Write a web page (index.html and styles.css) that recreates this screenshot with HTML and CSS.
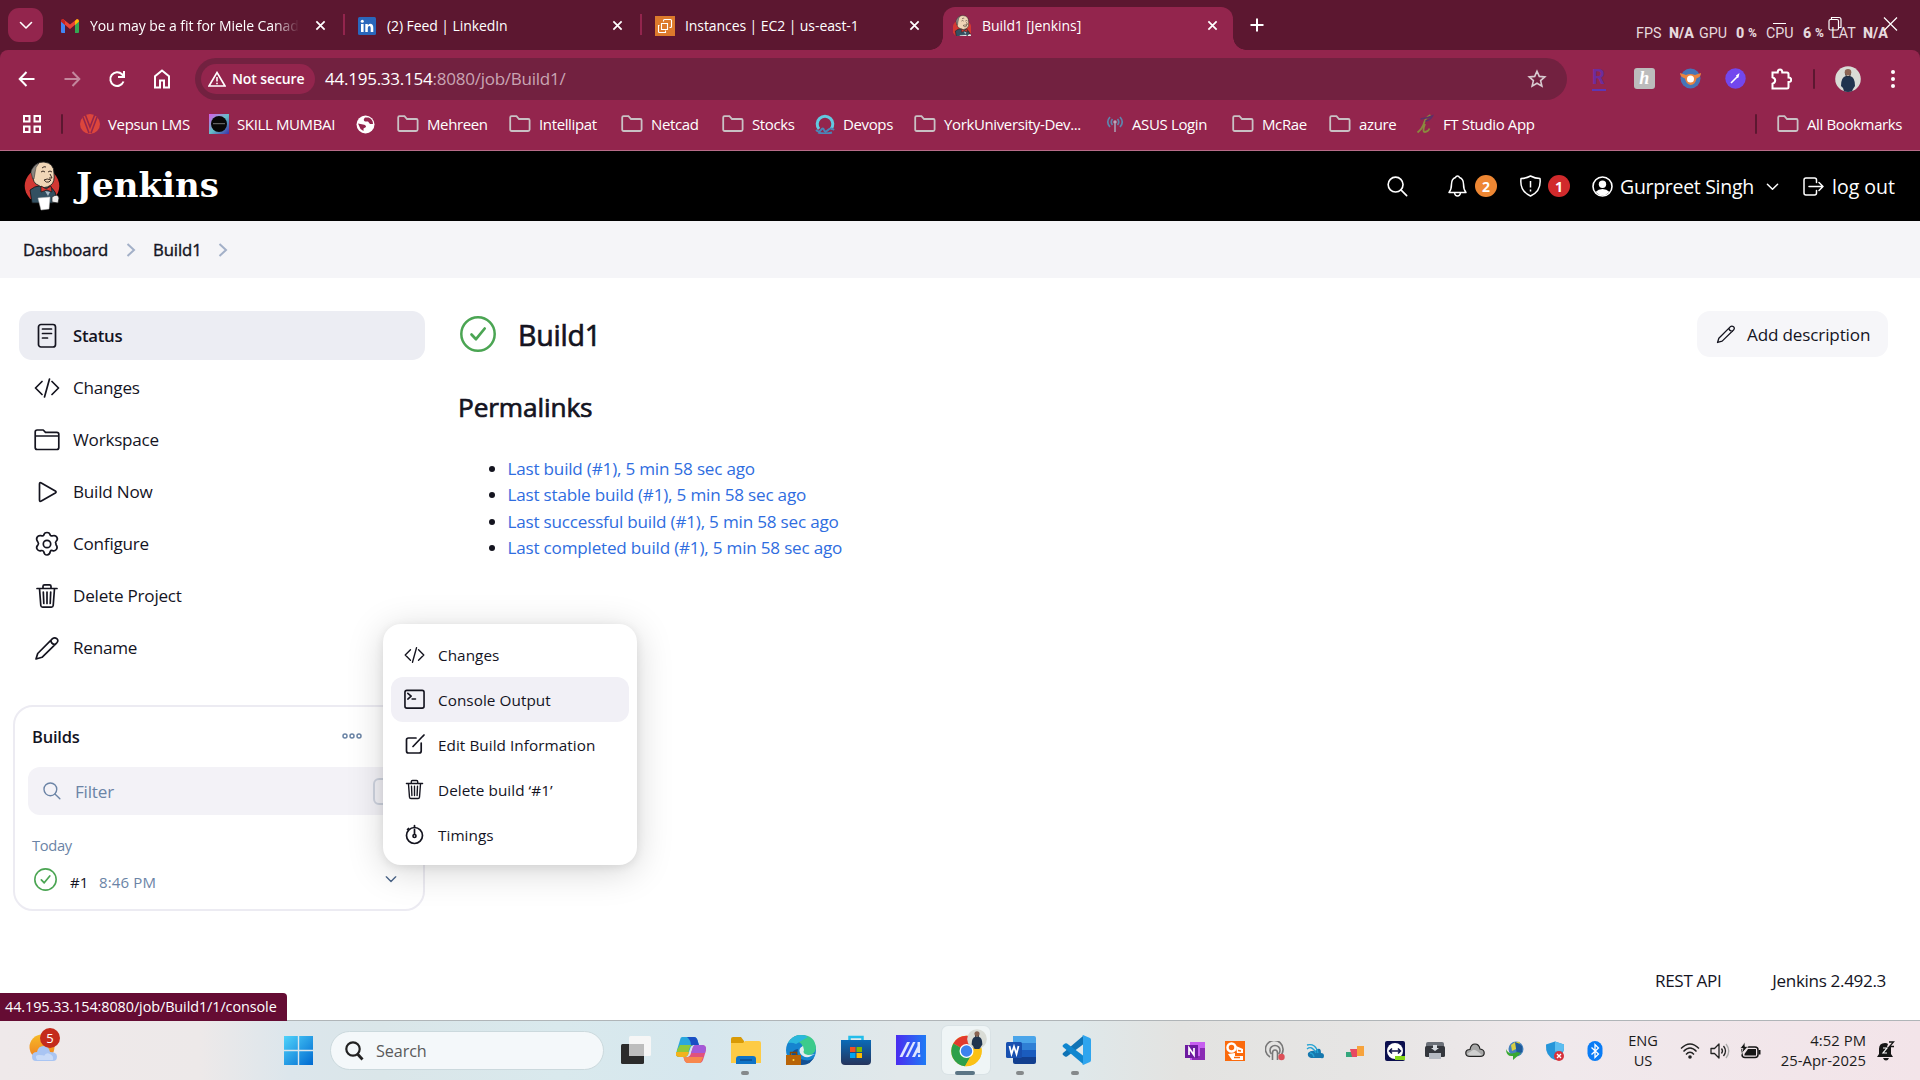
FILE: index.html
```html
<!DOCTYPE html>
<html lang="en">
<head>
<meta charset="utf-8">
<title>Build1 [Jenkins]</title>
<link rel="stylesheet" href="styles.css">
</head>
<body>
<svg class="sprite" aria-hidden="true">
  <symbol id="x" viewBox="0 0 12 12"><path d="M1.500 1.500l9 9M10.500 1.500l-9 9" stroke="#fff" stroke-width="1.900" fill="none"/></symbol>
  <symbol id="folder" viewBox="0 0 22 18"><path d="M1.200 14.500v-12q0-1.300 1.300-1.300h5l2.500 2.800h9.300q1.300 0 1.300 1.300v9.200q0 1.500-1.500 1.500H2.700q-1.500 0-1.500-1.500z" fill="none" stroke="#c9c1c4" stroke-width="1.800"/></symbol>
  <symbol id="chev" viewBox="0 0 14 14"><path d="M1.500 4.500L7 10l5.500-5.500" fill="none" stroke="currentColor" stroke-width="1.600" stroke-linecap="round" stroke-linejoin="round"/></symbol>
  <symbol id="crumb" viewBox="0 0 10 16"><path d="M1.500 2L8 8l-6.500 6" fill="none" stroke="#a3b0c8" stroke-width="2"/></symbol>
  <symbol id="code" viewBox="0 0 26 20"><path d="M8 3.500L1.500 10 8 16.500M18 3.500l6.500 6.500-6.500 6.500M15.500 1l-5 18" class="ln"/></symbol>
  <symbol id="trash" viewBox="0 0 26 26"><path d="M5.500 5.500l1.300 17q.2 1.700 1.800 1.700h8.800q1.600 0 1.800-1.700l1.300-17M3 5.500h20M9 5.500V3.300q0-1.500 1.500-1.500h5q1.500 0 1.500 1.500v2.200M9.300 9l.5 11.500M13 9v11.500M16.700 9l-.5 11.500" class="ln"/></symbol>
  <symbol id="pencil" viewBox="0 0 26 26"><path d="M2 24l1.700-5.500L18.500 3.700q2.200-1.800 4.300 0t0 4.100L8 22.300zM17 5.200q-.3 3.800 4.300 4.300" class="ln"/></symbol>
  <symbol id="glass" viewBox="0 0 22 22"><circle cx="9" cy="9" r="7.800" fill="none" stroke="currentColor" stroke-width="1.700"/><path d="M14.600 14.600l6 6" stroke="currentColor" stroke-width="1.700" stroke-linecap="round"/></symbol>
  <symbol id="ok" viewBox="0 0 36 36"><circle cx="18" cy="18" r="16.700" fill="none" stroke="#4ba553" stroke-width="2.500"/><path d="M11.500 18.500l4.500 4.700 8.700-10.700" fill="none" stroke="#4ba553" stroke-width="2.700" stroke-linecap="round" stroke-linejoin="round"/></symbol>
  <symbol id="portrait" viewBox="0 0 26 26"><circle cx="13" cy="13" r="12.800" fill="#d9dcd6"/><path d="M6 20q0-9 5-10h4q5 1 5 10l-2 3-1 2.200q-4 1.500-8 0L8 22z" fill="#20344e"/><circle cx="13" cy="6.300" r="3.300" fill="#8a6452"/><path d="M10.200 7.500q2.800 5.500 5.600 0l-.6 3h-4.400z" fill="#2a2325"/></symbol>
  <symbol id="butler" viewBox="0 0 36 50"><circle cx="18" cy="25" r="17.300" fill="#d33833"/><path d="M6 29q5-4 9-4l12 1q5 4 6 12l-4 4H8z" fill="#335061" stroke="#111" stroke-width=".8"/><path d="M8 12Q11 0 20 1q10 1 10 11 1 9-3 12-7 5-13 0-5-1-6-12z" fill="#f0d6b7" stroke="#222" stroke-width=".9"/><path d="M8 15q-2-4 0-7 3-5 7-6-4 4-4 10l-1 6q-2 0-2-3z" fill="#8a8580" stroke="#222" stroke-width=".5"/><path d="M17 11q2-2 4 0M24 11q2-2 4 0M26 13l2 4h-3M20 19q3-2 7 0l-2 2q-3 1-5-2M18 7q2-2 4-1" fill="none" stroke="#3c2d25" stroke-width="1"/><path d="M17 25l5 3 5-3 1 6-5-2-6 2z" fill="#d33833" stroke="#111" stroke-width=".6"/><path d="M21 30l5 1-2 4z" fill="#a9bac6"/><path d="M14 37l12-1-1 12-8 1z" fill="#fff" stroke="#bbb" stroke-width=".5"/><path d="M28 36q6-4 7 1l-1 5-6-1z" fill="#eee" stroke="#222" stroke-width=".7"/></symbol>
</svg>

<header class="tabs">
  <button class="tabmenu"><svg width="14" height="14"><use href="#chev"/></svg></button>
  <div class="tab tab1">
    <svg width="18" height="14" viewBox="0 0 18 14"><path d="M0 2v11q0 1 1 1h3V5z" fill="#4285f4"/><path d="M18 2v11q0 1-1 1h-3V5z" fill="#34a853"/><path d="M0 2.500Q0 0 2 0l7 5.500L16 0q2 0 2 2.500L9 10z" fill="#ea4335"/><path d="M14 2l2-2q2 0 2 2.500L14 6z" fill="#fbbc04"/><path d="M0 2.500Q0 0 2 0l2 2v4z" fill="#c5221f"/></svg>
    <span class="fade">You may be a fit for Miele Canada</span><svg class="cls"><use href="#x"/></svg>
  </div>
  <div class="tab tab2">
    <svg width="18" height="18" viewBox="0 0 18 18"><rect width="18" height="18" rx="1.500" fill="#2a67bc"/><g fill="#fff"><circle cx="4.300" cy="4.200" r="1.500"/><path d="M3 7h2.600v8H3zM7.300 7h2.500v1.200q2.500-2.600 4.700-.5.800.8.800 3.300v4h-2.600v-4q0-2-1.300-2-1.600 0-1.600 2v4H7.300z"/></g></svg>
    <span>(2) Feed | LinkedIn</span><svg class="cls"><use href="#x"/></svg>
  </div>
  <div class="tab tab3">
    <svg width="20" height="20" viewBox="0 0 20 20"><rect width="20" height="20" fill="#dc7a2c"/><g fill="none" stroke="#fff" stroke-width="1.100"><path d="M6.500 7.500h6v6h-6zM8.500 5.500v-1q0-1 1-1h6q1 0 1 1v6q0 1-1 1h-1M4.500 9.500h-1v6q0 1 1 1h6v-2"/></g></svg>
    <span>Instances | EC2 | us-east-1</span><svg class="cls"><use href="#x"/></svg>
  </div>
  <div class="tab tab4">
    <svg width="18" height="21" viewBox="2 0 32 38"><use href="#butler" width="36" height="50"/></svg>
    <span>Build1 [Jenkins]</span><svg class="cls"><use href="#x"/></svg>
  </div>
  <svg class="plus" width="14" height="14" viewBox="0 0 14 14"><path d="M7 .5v13M.5 7h13" stroke="#fff" stroke-width="2"/></svg>
  <div class="meter"><span>FPS</span><b>N/A</b><span>GPU</span><b>0</b><b class="pc">%</b><span>CPU</span><b>6</b><b class="pc">%</b><span>LAT</span><b>N/A</b></div>
  <svg class="winctl" width="132" height="20" viewBox="0 0 132 20"><g fill="none" stroke="#fff" stroke-width="1.200"><path d="M6 8.500h13M117 2.500l13 13M130 2.500l-13 13"/><rect x="62" y="4.500" width="9.500" height="10.500" rx="1.500"/><path d="M64.500 4V2.500h7.500q2 0 2 2v8h-2"/></g></svg>
</header>

<div class="chrome">
  <nav class="toolbar">
    <div class="nav">
      <svg width="18" height="18" viewBox="0 0 18 18"><path d="M16.500 9H2M8.500 2L1.700 9l6.800 7" fill="none" stroke="#fff" stroke-width="2"/></svg>
      <svg width="18" height="18" viewBox="0 0 18 18" opacity=".45"><path d="M1.500 9H16M9.500 2l6.800 7-6.800 7" fill="none" stroke="#fff" stroke-width="2"/></svg>
      <svg width="18" height="18" viewBox="0 0 18 18"><path d="M15.500 11.500A6.800 6.800 0 1 1 14 4.300l2 2.200M16 1v6h-6" fill="none" stroke="#fff" stroke-width="2"/></svg>
      <svg width="18" height="20" viewBox="0 0 18 20"><path d="M2 18.500V7.300L9 1.500l7 5.800v11.200h-5v-7H7v7z" fill="none" stroke="#fff" stroke-width="2"/></svg>
    </div>
    <div class="omni">
      <div class="chip"><svg width="18" height="16" viewBox="0 0 18 16"><path d="M9 1.500l8 13.500H1zM9 6v4.500M9 11.700v1.600" fill="none" stroke="#fff" stroke-width="1.600"/></svg><b>Not secure</b></div>
      <span class="url">44.195.33.154<i>:8080/job/Build1/</i></span>
      <svg class="star" width="20" height="20" viewBox="0 0 20 20"><path d="M10 2.200l2.300 5.200 5.500.5-4.200 3.700 1.300 5.500-4.900-2.900-4.900 2.900 1.300-5.500-4.200-3.700 5.500-.5z" fill="none" stroke="#d8cbd0" stroke-width="1.600"/></svg>
    </div>
    <div class="exts">
      <span class="rak">R</span>
      <span class="honey">h</span>
      <svg width="21" height="21" viewBox="0 0 21 21"><circle cx="10.500" cy="10.500" r="10" fill="#4674b8"/><path d="M0 5l6 2q4-2 9 0l6-2q0 4-4.500 5.500-1 6-6 6.500Q6 16 5 10.500 0 9 0 5z" fill="#ea8440"/><circle cx="10.500" cy="11" r="3.500" fill="#fff"/></svg>
      <svg width="21" height="21" viewBox="0 0 21 21"><circle cx="10.500" cy="10.500" r="10.200" fill="#7247ee"/><path d="M6 15l6-6" stroke="#fff" stroke-width="1.600"/><path d="M11 7.500L14.500 5 13.500 9.500 12 10z" fill="#fff"/></svg>
      <svg width="21" height="22" viewBox="0 0 21 22"><path d="M1.500 4.500h5.200q0-3 2.300-3t2.300 3h4.700q1.500 0 1.500 1.500v3.500q2.700 0 2.700 2.300T17.500 14v5q0 1.500-1.500 1.500H1.500v-4.800q2.700-1 2.700-3.200T1.500 9.300z" fill="none" stroke="#fff" stroke-width="2"/></svg>
    </div>
    <i class="vr"></i>
    <svg class="avatar" width="26" height="26"><use href="#portrait"/></svg>
    <svg class="dots" width="4" height="18" viewBox="0 0 4 18"><g fill="#fff"><circle cx="2" cy="2" r="2"/><circle cx="2" cy="9" r="2"/><circle cx="2" cy="16" r="2"/></g></svg>
  </nav>

  <nav class="marks">
    <svg width="18" height="18" viewBox="0 0 18 18"><path d="M1 1h5.500v5.500H1zM11.500 1H17v5.500h-5.500zM1 11.500h5.500V17H1zM11.500 11.500H17V17h-5.500z" fill="none" stroke="#fff" stroke-width="2"/></svg>
    <i class="vr"></i>
    <a><svg width="20" height="20" viewBox="0 0 20 20"><circle cx="10" cy="10" r="10" fill="#dc463c"/><path d="M5 0l5 13L15 0M3 3l6 16M17 3l-6 16" fill="none" stroke="#93254d" stroke-width="1.600"/></svg><span>Vepsun LMS</span></a>
    <a><svg width="20" height="20" viewBox="0 0 20 20"><defs><linearGradient id="sk" x2="1" y2="1"><stop stop-color="#d95ae8"/><stop offset=".5" stop-color="#66bfc8"/><stop offset="1" stop-color="#3b2fa8"/></linearGradient></defs><rect width="20" height="20" fill="url(#sk)"/><circle cx="10" cy="10" r="8" fill="#080808"/><path d="M4 9.700h12" stroke="#777"/></svg><span>SKILL MUMBAI</span></a>
    <svg width="19" height="19" viewBox="0 0 19 19"><circle cx="9.500" cy="9.500" r="9" fill="#fff"/><path d="M2 8.500l5 1q3 0 3 2.500l-2.500 1.500V16l-3-2zM9 2.500Q6.500 5 9 6.500h3l2 2.500h3Q17 4 12.500 2.500z" fill="#93254d"/></svg>
    <a><svg class="fd"><use href="#folder"/></svg><span>Mehreen</span></a>
    <a><svg class="fd"><use href="#folder"/></svg><span>Intellipat</span></a>
    <a><svg class="fd"><use href="#folder"/></svg><span>Netcad</span></a>
    <a><svg class="fd"><use href="#folder"/></svg><span>Stocks</span></a>
    <a><svg width="20" height="20" viewBox="0 0 20 20"><path d="M4 15A7.800 7.800 0 1 1 16 15" fill="none" stroke="#63c9e0" stroke-width="3"/><path d="M1 16q3 3 5 0t3 0 4 0 6 0M3 18.500q7 2 14 0" fill="none" stroke="#4a86b8" stroke-width="2"/></svg><span>Devops</span></a>
    <a><svg class="fd"><use href="#folder"/></svg><span>YorkUniversity-Dev...</span></a>
    <a><svg width="18" height="18" viewBox="0 0 18 18"><g fill="none" stroke="#5e86ad" stroke-width="1.700"><path d="M4 2Q-.5 7 4 12M14 2q4.500 5 0 10M6.500 4Q4 7 6.500 10M11.500 4q2.500 3 0 6"/></g><circle cx="9" cy="7" r="1.700" fill="#b9a9bb"/><path d="M9 8v9" stroke="#a78fa6" stroke-width="1.800"/></svg><span>ASUS Login</span></a>
    <a><svg class="fd"><use href="#folder"/></svg><span>McRae</span></a>
    <a><svg class="fd"><use href="#folder"/></svg><span>azure</span></a>
    <a><svg width="19" height="20" viewBox="0 0 18 20"><path d="M1 18.500q5-4 6.500-9.500T14 1M8.500 10q-3 8 0 8t4.500-3.500" fill="none" stroke="#8a8a3e" stroke-width="1.800"/><path d="M4 5q7-1 12-3-2 4-7 5" fill="none" stroke="#5c3168" stroke-width="1.500"/></svg><span>FT Studio App</span></a>
    <i class="vr"></i>
    <a><svg class="fd"><use href="#folder"/></svg><span>All Bookmarks</span></a>
  </nav>
</div>

<header class="jhead">
  <svg width="36" height="50"><use href="#butler"/></svg>
  <span class="brand">Jenkins</span>
  <div class="jright">
    <svg class="jsearch" width="21" height="21"><use href="#glass"/></svg>
    <svg width="21" height="22" viewBox="0 0 21 22"><path d="M2 17.500q2.500-3 2.500-8.500 0-5 4-6.500Q9 1 10.500 1T12.500 2.500q4 1.500 4 6.500 0 5.500 2.500 8.500zM7.500 18q.5 3 3 3t3-3" fill="none" stroke="#fff" stroke-width="1.500" stroke-linejoin="round"/></svg>
    <b class="badge or">2</b>
    <svg class="jshield" width="23" height="22" viewBox="0 0 23 22"><path d="M11.500 1q4.500 2.500 9.500 2.600Q22.500 16 11.500 21 .5 16 2 3.600 7 3.500 11.500 1zM11.500 6v6.500M11.500 14.500v2" fill="none" stroke="#fff" stroke-width="1.500" stroke-linejoin="round"/></svg>
    <b class="badge rd">1</b>
    <svg class="juser" width="21" height="21" viewBox="0 0 21 21"><circle cx="10.500" cy="10.500" r="9.500" fill="none" stroke="#fff" stroke-width="1.600"/><circle cx="10.500" cy="8.300" r="3.700" fill="#fff"/><path d="M3.500 16q3-3 7-3t7 3q-7 7-14 0z" fill="#fff"/></svg>
    <span class="uname">Gurpreet Singh</span>
    <svg class="jchev" width="13" height="13"><use href="#chev"/></svg>
    <svg class="jout" width="21" height="19" viewBox="0 0 21 19"><path d="M13.500 5.500V3q0-2-2-2H3Q1 1 1 3v13q0 2 2 2h8.500q2 0 2-2v-2.500M6 9.500h14M16 5.500l4 4-4 4" fill="none" stroke="#fff" stroke-width="1.500" stroke-linecap="round" stroke-linejoin="round"/></svg>
    <span class="lo">log out</span>
  </div>
</header>

<nav class="crumbs"><span>Dashboard</span><svg width="10" height="16"><use href="#crumb"/></svg><span>Build1</span><svg width="10" height="16"><use href="#crumb"/></svg></nav>

<div class="page">
  <aside class="side">
    <a class="task on"><svg width="26" height="26" viewBox="0 0 26 26"><rect x="4.500" y="1.500" width="17" height="22.500" rx="2.500" class="ln"/><path d="M8.500 6h9M8.500 10.500h9M8.500 15h5" class="ln"/></svg>Status</a>
    <a class="task"><svg width="26" height="20"><use href="#code"/></svg>Changes</a>
    <a class="task"><svg width="26" height="26" viewBox="0 0 26 26"><path d="M1.200 20.500V5q0-2 2-2h6l2.300 2.300h11.300q2 0 2 2v13.200q0 2-2 2H3.200q-2 0-2-2zM1.200 9h23.600" class="ln"/></svg>Workspace</a>
    <a class="task"><svg width="26" height="26" viewBox="0 0 26 26"><path d="M5.500 5v16q0 2 1.800 1l14-8q1.500-1 0-2L7.300 4Q5.500 3 5.500 5z" class="ln"/></svg>Build Now</a>
    <a class="task"><svg width="26" height="26" viewBox="0 0 26 26"><path d="M9.700 4.300Q10.300 1.500 13 1.500t3.300 2.800q.7 1 2.500.4 2.800-.7 4.100 1.500t-.9 4.300q-1 1 0 2.300v.9q1.900 2.200.6 4.400t-4 1.500q-1.700-.5-2.300.8-.6 3.600-3.300 3.600t-3.300-3.400q-.6-1.400-2.500-1-2.800.7-4.100-1.500t.9-4.300q1-1.200 0-2.600Q1.800 8.300 3.100 6.200t4.100-1.500q1.900.5 2.500-.4z" class="ln"/><circle cx="13" cy="13" r="3.700" class="ln"/></svg>Configure</a>
    <a class="task"><svg width="26" height="26"><use href="#trash"/></svg>Delete Project</a>
    <a class="task"><svg width="26" height="26"><use href="#pencil"/></svg>Rename</a>

    <section class="builds">
      <div class="bhead"><b>Builds</b><svg width="20" height="8" viewBox="0 0 20 8"><g fill="none" stroke="#6b84a6" stroke-width="1.500"><circle cx="3" cy="4" r="2"/><circle cx="10" cy="4" r="2"/><circle cx="17" cy="4" r="2"/></g></svg></div>
      <div class="filter"><svg width="18" height="18"><use href="#glass"/></svg><span>Filter</span><i></i></div>
      <div class="day">Today</div>
      <div class="run"><svg width="23" height="23"><use href="#ok"/></svg><span class="num">#1</span><span>8:46 PM</span><svg class="rc" width="12" height="12"><use href="#chev"/></svg></div>
    </section>
  </aside>

  <main class="main">
    <div class="title"><svg width="36" height="36"><use href="#ok"/></svg><h1>Build1</h1><button class="desc"><svg width="20" height="20"><use href="#pencil"/></svg>Add description</button></div>
    <h2>Permalinks</h2>
    <ul>
      <li><a>Last build (#1), 5 min 58 sec ago</a></li>
      <li><a>Last stable build (#1), 5 min 58 sec ago</a></li>
      <li><a>Last successful build (#1), 5 min 58 sec ago</a></li>
      <li><a>Last completed build (#1), 5 min 58 sec ago</a></li>
    </ul>
    <footer><span class="api">REST API</span><span class="ver">Jenkins 2.492.3</span></footer>
  </main>
</div>

<div class="menu">
  <a><svg width="21" height="18"><use href="#code"/></svg>Changes</a>
  <a class="on"><svg width="22" height="21" viewBox="0 0 22 21"><rect x="1" y="1" width="20" height="18.500" rx="2" class="ln"/><path d="M4 4l3.500 3L4 10M8.500 10H12" class="ln"/></svg>Console Output</a>
  <a><svg width="21" height="21" viewBox="0 0 21 21"><path d="M12 4H4.500Q2.500 4 2.500 6v11q0 2 2 2h10.700q2 0 2-2V9M9 12.500L18 3M18.700 2.300L20 1" class="ln"/></svg>Edit Build Information</a>
  <a><svg width="21" height="21"><use href="#trash"/></svg>Delete build ‘#1’</a>
  <a><svg width="21" height="21" viewBox="0 0 21 21"><circle cx="10.500" cy="11.500" r="8" class="ln"/><circle cx="10.500" cy="12" r="1.500" class="ln"/><path d="M10.500 10V5.500M10.500 3.500V1.500M4.500 4.500L3.500 5.500" class="ln"/></svg>Timings</a>
</div>

<div class="hoverurl">44.195.33.154:8080/job/Build1/1/console</div>

<footer class="taskbar">
  <div class="weather"><svg width="38" height="44" viewBox="0 0 38 44"><defs><linearGradient id="sun" x2="0" y2="1"><stop stop-color="#f6bb28"/><stop offset="1" stop-color="#ef7b1f"/></linearGradient></defs><circle cx="18" cy="22" r="12.500" fill="url(#sun)"/><path d="M12 36q-4 0-4-4.500t5-4.500q1-6 6.500-6t6.500 6q7 0 7 4.500t-4 4.500z" fill="#a9c5f3"/><path d="M13 35q-3-5 2-5t5 1q2-4 6-2t3 6z" fill="#c9dbf8"/></svg><b>5</b></div>
  <div class="apps">
    <svg class="win" width="29" height="29" viewBox="0 0 29 29"><defs><linearGradient id="wg" x2="1" y2="1"><stop stop-color="#4fd3fb"/><stop offset="1" stop-color="#0069d0"/></linearGradient></defs><path d="M0 0h13.800v13.800H0zM15.200 0H29v13.800H15.200zM0 15.200h13.800V29H0zM15.200 15.200H29V29H15.200z" fill="url(#wg)"/></svg>
    <div class="search"><svg width="19" height="20" viewBox="0 0 19 20"><circle cx="8" cy="8" r="6.700" fill="none" stroke="#222" stroke-width="2.200"/><path d="M12.500 13l5 5.500" stroke="#222" stroke-width="2.800"/></svg>Search</div>
    <div class="pins">
      <span><svg width="30" height="30" viewBox="0 0 30 30"><rect y="9" width="23" height="20" rx="1.500" fill="#2b2b2b"/><rect x="8" y="1" width="22" height="20" rx="1.500" fill="#f6f6f6"/><path d="M8 9h15v12H8z" fill="#bdbdbd"/></svg></span>
      <span><svg width="30" height="30" viewBox="0 0 30 30"><path d="M6 2h12q3 0 4 5l1 3h-5q-3 0-4 4l-2 6q-1 2-4 2H3q-4 0-2-7L4 5q.5-3 2-3z" fill="#2aa7dc"/><path d="M11 2h7q3 0 4 5l1 3h-5q-2 0-3 1 0-6-4-9z" fill="#1a4fc4"/><path d="M1 15q0 7 5 7h2q3 0 4-4l2-6q1-2 3-2H4z" fill="#8fc93a"/><path d="M0 17h13l-1 3q-1 2-4 2H3q-4 0-3-5z" fill="#f2b31d"/><path d="M24 28H12q-3 0-4-4l-.5-2H11q3 0 4-4l2-6q1-2 4-2h5q4 0 4 4 0 2-3 11-1 3-3 3z" fill="#e0527e"/><path d="M19 10h7q4 0 4 4l-1 4H15l2-6q1-2 2-2z" fill="#a45ad8"/><path d="M24 28H12q-3 0-4-4l-.5-2H11h16l-1 3q-1 3-2 3z" fill="#f7884d"/></svg></span>
      <span class="run1"><svg width="30" height="28" viewBox="0 0 30 28"><path d="M0 3q0-2 2-2h8l3 4v5H0z" fill="#d99a06"/><path d="M0 7h12l2-2h14q2 0 2 2v20H0z" fill="#fdcb45"/><path d="M5 28v-5q0-3 3-3h14q3 0 3 3v5z" fill="#0e73c6"/><path d="M9 24h12" stroke="#0a4d91" stroke-width="1.500"/></svg></span>
      <span><svg width="30" height="30" viewBox="0 0 30 30"><circle cx="15" cy="15" r="15" fill="#1684cf"/><path d="M2 8Q7 0 15 0q14 0 15 13-1 8-10 7-4-1-3-4 1-9-8-10-4 0-7 2z" fill="#3ccb8b"/><path d="M2 8Q7 0 15 0q4 0 7 2L10 9q-4-2-8-1z" fill="#2bb7dd"/><path d="M12 14q-3 9 6 11t11-5q-3 10-14 10l-8-3q-4-12 5-13z" fill="#124f93"/><path d="M17 11q-5 2-3 7 3 5 9 4l6-3q-4 1-7 1-6-1-4-5z" fill="#e2ebee"/><path d="M0 20h15v10H0z" fill="#b86408"/><path d="M4.500 20v-2.500h6V20" fill="none" stroke="#8a4700" stroke-width="1.500"/><circle cx="7.500" cy="25" r="1" fill="#ffd54a"/></svg></span>
      <span><svg width="30" height="30" viewBox="0 0 30 30"><defs><linearGradient id="st" x2="0" y2="1"><stop stop-color="#0a6bb8"/><stop offset="1" stop-color="#25345c"/></linearGradient></defs><path d="M8.500 7V2h13v5" fill="none" stroke="#23bdea" stroke-width="2.500"/><path d="M0 5h30v21q0 4-4 4H4q-4 0-4-4z" fill="url(#st)"/><path d="M9 12h5.500v5H9z" fill="#f25022"/><path d="M15.500 12H21v5h-5.500z" fill="#7fba00"/><path d="M9 18h5.500v5H9z" fill="#00a4ef"/><path d="M15.500 18H21v5h-5.500z" fill="#ffb900"/></svg></span>
      <span><svg width="30" height="30" viewBox="0 0 30 30"><defs><linearGradient id="ma" x2="1" y2="0"><stop stop-color="#4a2cf0"/><stop offset="1" stop-color="#1f7bf5"/></linearGradient></defs><rect width="30" height="30" fill="url(#ma)"/><path d="M3.500 22L11 7h3L6.500 22zM9.500 22L17 7h2.500L12 22zM16 22l5.500-11v6L19 22zM21.500 7H24v11h-2.500zM22 19.500h2.300V22H22z" fill="#dfe6ff"/></svg></span>
      <span class="act"><svg width="48" height="48" viewBox="0 0 48 48"><circle cx="24.500" cy="25" r="15.200" fill="#fbc116"/><path d="M24.500 25L11.300 17.400A15.200 15.200 0 0 1 37.700 17.400z" fill="#e23b2e"/><path d="M24.500 25L11.300 17.400A15.200 15.200 0 0 0 23 40.200L30 28z" fill="#2da04b"/><path d="M24.500 17.500h13.200L30 28l-7 12.200 2-.1A15.200 15.200 0 0 0 37.700 17.400z" fill="#fbc116"/><circle cx="24.500" cy="25" r="7" fill="#fff"/><circle cx="24.500" cy="25" r="5.700" fill="#3d82ee"/><use href="#portrait" x="25" y="3" width="20" height="20"/></svg></span>
      <span class="run1"><svg width="30" height="28" viewBox="0 0 30 28"><path d="M7 0h21q2 0 2 2v5H7z" fill="#4aa5ea"/><path d="M7 7h23v7H7z" fill="#2f7fd5"/><path d="M7 14h23v7H7z" fill="#1a5cbe"/><path d="M7 21h23v5q0 2-2 2H9q-2 0-2-2z" fill="#123f8f"/><rect y="6" width="16" height="16" rx="1.500" fill="#1850b0"/><path d="M3.500 10l2 8 2.500-7.500 2.500 7.500 2-8" fill="none" stroke="#fff" stroke-width="1.800"/></svg></span>
      <span class="run1"><svg width="30" height="30" viewBox="0 0 30 30"><path d="M22 1L2 18q-1 1 0 2l2 1.500q1 .5 2 0L24 8z" fill="#0f73b5"/><path d="M22 29L2 12q-1-1 0-2l2-1.500q1-.5 2 0L24 22z" fill="#0f86cf"/><path d="M22 0l7 3q1 .5 1 2v20q0 1.500-1 2l-7 3q-1 0 0-2V2q-1-2 0-2z" fill="#2fa5ee"/></svg></span>
    </div>
  </div>
  <div class="tray">
    <svg viewBox="0 0 20 20"><rect x="5" y="1" width="15" height="18" fill="#c75ef0"/><path d="M15 7h5v12H7v-4h8z" fill="#8a2bb4"/><rect y="4" width="13" height="13" fill="#6d1ba0"/><path d="M4 14V7l5 7V7" fill="none" stroke="#fff" stroke-width="1.700"/></svg>
    <svg viewBox="0 0 20 20"><rect width="20" height="20" fill="#fb6a0c"/><circle cx="6.500" cy="6.500" r="4" fill="#fb6a0c" stroke="#fff" stroke-width="2.500"/><path d="M11 5l7 3v4h-6zM3 13l7-1v3h8v4H7z" fill="#fff"/><path d="M9 16.500h6M13 9.500l3 .5" stroke="#fb6a0c" stroke-width="1.300"/></svg>
    <svg viewBox="0 0 20 20"><path d="M5 16a8.800 8.800 0 1 1 10-1M6.500 13a5 5 0 1 1 7 0" fill="none" stroke="#777" stroke-width="1.600"/><path d="M7.500 19v-7q0-3 2.500-3t2.500 3v7" fill="none" stroke="#777" stroke-width="1.600"/><circle cx="16.500" cy="16" r="3.200" fill="#dd4f57"/></svg>
    <svg viewBox="0 0 20 20"><path d="M6 17q-4-1-3-5 3-3 7-2 2-3 5-2 1 1 1 4 3 0 3 3t-3 2z" fill="#1678ae"/><path d="M2 8q5-4 9 4M2 4q9-2 11 8M5 12q3 0 4 4" fill="none" stroke="#23a3d4" stroke-width="1.400"/></svg>
    <svg viewBox="0 0 20 20"><path d="M1 11h6v5H1z" fill="#34a77d"/><path d="M5 8h7v8H7z" fill="#e84a62"/><path d="M12 5h7v10h-7z" fill="#f7a33c"/></svg>
    <svg viewBox="0 0 20 20"><rect width="20" height="20" rx="2" fill="#0b0f4e"/><circle cx="10" cy="10" r="8" fill="#fff"/><path d="M5 10h10M7 7.500L4.500 10 7 12.500M13 7.500l2.500 2.500-2.500 2.500" fill="none" stroke="#10154e" stroke-width="1.500"/><path d="M10 15h10v4H10z" fill="#86d71a"/></svg>
    <svg viewBox="0 0 20 20"><path d="M1 3q0-2 2-2h14q2 0 2 2v3H1z" fill="#6b7078"/><rect y="5" width="20" height="11" rx="1.500" fill="#34373d"/><path d="M8 4h4v3h2l-4 3-4-3h2z" fill="#d9dde3"/><path d="M4 12h12v6H4z" fill="#b5bac2"/></svg>
    <svg viewBox="0 0 20 20"><path d="M5 15.500Q.8 15.500.8 12T5 8.500Q6 3 10 3t5 5q4.200.5 4.200 4T15 15.500z" fill="#a7a7a7" stroke="#222" stroke-width="1.200"/><path d="M2 13l6-4q2-1 9 5H5z" fill="#cfcfcf"/></svg>
    <svg viewBox="0 0 20 20"><circle cx="11" cy="8" r="7.500" fill="#4682bd"/><path d="M6 4q4-4 9-3l-2 6-6 3z" fill="#d8cf45"/><path d="M10 1q9 2 7 10l-5 3z" fill="#1e5a9a"/><path d="M1 8q0 8 7 7v4l8-7-4-1q-8 4-11-3z" fill="#39a832"/></svg>
    <svg viewBox="0 0 20 20"><path d="M10 .5l9 3Q20 15 10 19 0 15 1 3.500z" fill="#2595d9"/><path d="M10 .5l9 3q.2 4-.7 7H10z" fill="#5bbdf0"/><circle cx="14" cy="15" r="5" fill="#d7313c"/><path d="M12 13l4 4M16 13l-4 4" stroke="#fff" stroke-width="1.400"/></svg>
    <svg viewBox="0 0 20 20"><rect x="2.500" width="15" height="20" rx="7.500" fill="#0a7cf5"/><path d="M6.500 6.500l7 6.500-3.500 3.500v-13l3.500 3.500-7 6.500" fill="none" stroke="#fff" stroke-width="1.300"/></svg>
  </div>
  <div class="lang">ENG<br>US</div>
  <div class="sys">
    <svg width="20" height="18" viewBox="0 0 20 18"><g fill="none" stroke="#222" stroke-width="1.400"><path d="M1 6.500q9-9 18 0M3.500 9.500q6.500-7 13 0M6 12.500q4-4.500 8 0"/></g><circle cx="10" cy="15" r="1.800" fill="#222"/></svg>
    <svg width="20" height="18" viewBox="0 0 20 18"><g fill="none" stroke="#222" stroke-width="1.300" stroke-linejoin="round"><path d="M1 6.500h3.500L9 2v14l-4.500-4.500H1z"/><path d="M11.500 6.500q2 2.500 0 5M13.500 4q4 5 0 10"/><path d="M16 2q5.500 7 0 14" stroke="#aaa"/></g></svg>
    <svg width="21" height="18" viewBox="0 0 21 18"><rect x="2" y="5" width="16" height="10.500" rx="3" fill="none" stroke="#161616" stroke-width="1.500"/><path d="M8 7h8v6.500H4.500V12z" fill="#161616"/><path d="M19.500 8v4.500" stroke="#161616" stroke-width="2"/><path d="M5 0L0 6.500h3L1 12.500l7-8H5z" fill="#161616" stroke="#f0e8ea" stroke-width=".8"/></svg>
  </div>
  <div class="clock">4:52 PM<br>25-Apr-2025</div>
  <svg class="bell" width="18" height="20" viewBox="0 0 18 20"><path d="M0 16l2-3V8q0-6 6-6 2 0 3 1l-1 3h4v7l2 3zM6 17h6q-1 2.500-3 2.500T6 17z" fill="#161616"/><path d="M12 1h4.500L12.500 5.500h4.500" fill="none" stroke="#161616" stroke-width="1.300"/><path d="M6 7h4l-4 5h4" fill="none" stroke="#fff" stroke-width="1.200"/></svg>
</footer>
</body>
</html>
```
FILE: styles.css
```css
* { box-sizing: border-box; }
body {
  margin: 0;
  width: 1920px;
  height: 1080px;
  overflow: hidden;
  display: flex;
  flex-direction: column;
  position: relative;
  background: #fff;
  color: #14141f;
  font-family: "Open Sans", "Noto Sans", sans-serif;
  font-size: 17.1px;
}
svg { display: block; flex: none; }
button { border: 0; font: inherit; color: inherit; padding: 0; }
b { font-weight: 600; }
.sprite { position: absolute; width: 0; height: 0; }
.ln { fill: none; stroke: #14141f; stroke-width: 1.7; stroke-linecap: round; stroke-linejoin: round; }

/* browser tabs */
.tabs {
  position: relative;
  z-index: 1;
  height: 50px;
  background: #5c1730;
  color: #fff;
  display: flex;
  font-size: 14px;
  letter-spacing: -0.08px;
  white-space: nowrap;
}
.tabmenu {
  width: 35px; height: 34px;
  margin: 8px 7px 0 8px;
  border-radius: 11px;
  background: #93254d;
  color: #fff;
  display: grid;
  place-items: center;
}
.tab { display: flex; align-items: center; height: 37px; margin-top: 7px; position: relative; }
.tab span { flex: 1; margin-left: 11px; overflow: hidden; }
.tab .cls { width: 11px; height: 11px; margin-right: 15px; }
.tab1 { width: 291px; padding-left: 11px; }
.tab2 { width: 300px; padding-left: 17px; }
.tab2 .cls { margin-right: 18px; }
.tab3 { width: 302px; padding-left: 14px; }
.tab3 span { margin-left: 10px; }
.tab3 .cls { margin-right: 23px; }
.tab4 {
  width: 290px; height: 43px;
  padding: 0 0 6px 10px;
  border-radius: 12px 12px 0 0;
  background: #93254d;
}
.tab1::after, .tab2::after {
  content: "";
  position: absolute;
  right: -4px; top: 7px;
  width: 2px; height: 21px;
  background: #93254d;
}
.tab2::after { right: -1px; }
.tab4::before, .tab4::after {
  content: "";
  position: absolute;
  bottom: 0;
  width: 13px; height: 13px;
}
.tab4::before { left: -13px; background: radial-gradient(circle at 0 0, transparent 12.5px, #93254d 13px); }
.tab4::after { right: -13px; background: radial-gradient(circle at 100% 0, transparent 12.5px, #93254d 13px); }
.tab .fade { -webkit-mask-image: linear-gradient(90deg, #000 88%, transparent); mask-image: linear-gradient(90deg, #000 88%, transparent); margin-right: 16px; }
.plus { margin: 18px 0 0 17px; }
.meter {
  position: absolute;
  left: 1636px; top: 24px;
  display: grid;
  grid-template-columns: 33px 30px 37px 12px 18px 37px 12px 16px 32px 26px;
  font: 14.3px/18px "Roboto", sans-serif;
  letter-spacing: 0;
  color: #e6d9dd;
}
.meter b { font-weight: 800; }
.meter .pc { font-size: 12px; }
.winctl { position: absolute; left: 1767px; top: 15px; }

/* browser toolbar */
.chrome { height: 101px; background: #93254d; border-bottom: 1px solid #b76c88; border-radius: 8px 8px 0 0; box-shadow: 0 -8px 0 #5c1730; color: #fff; }
.toolbar { height: 57px; display: flex; align-items: center; }
.nav { width: 195px; display: flex; gap: 27px; padding-left: 18px; align-items: center; }
.omni { width: 1372px; height: 42px; border-radius: 21px; background: #722140; display: flex; align-items: center; padding: 0 20px 0 6px; }
.chip { width: 114px; height: 30px; border-radius: 15px; background: #93254d; display: flex; align-items: center; gap: 6px; padding-left: 7px; font-size: 14px; letter-spacing: -0.1px; white-space: nowrap; }
.url { flex: 1; margin-left: 10px; font-size: 17px; letter-spacing: -0.24px; }
.url i { font-style: normal; color: #c9a5b3; }
.exts { width: 246px; display: flex; align-items: center; gap: 24.8px; padding-left: 21px; }
.rak { width: 21px; height: 25px; text-align: center; font: 700 20px/22px "Roboto", sans-serif; color: #6d2c9c; background: linear-gradient(#5d36b5, #5d36b5) center bottom / 14px 2px no-repeat; }
.honey { width: 21px; height: 21px; border-radius: 3px; background: #bcbcbc; color: #fff; text-align: center; font: italic 700 18px/20px "Liberation Serif", serif; }
.vr { width: 2px; height: 20px; background: #5c1730; border-radius: 1px; }
.avatar { margin-left: 20px; }
.dots { margin-left: 30px; }
.marks {
  height: 34px;
  display: grid;
  align-items: center;
  padding-left: 23px;
  grid-template-columns: 38px 19px 129px 147px 41px 112px 112px 101px 93px 99px 192px 126px 97px 87px 339px 22px auto;
  font-size: 15px;
  letter-spacing: -0.37px;
}
.marks a { display: flex; align-items: center; gap: 8px; white-space: nowrap; }
.fd { width: 22px; height: 18px; margin-top: -1px; }

/* Jenkins header */
.jhead { height: 70px; background: #000; color: #fff; display: flex; align-items: center; padding-left: 24px; }
.brand { margin-left: 16px; font: 700 34px/40px "DejaVu Serif", serif; letter-spacing: 0; margin-top: -2px; }
.jright { margin-left: auto; width: 533px; display: flex; align-items: center; height: 70px; font-size: 19.5px; white-space: nowrap; }
.jsearch { margin-right: 39px; }
.badge { width: 22px; height: 22px; border-radius: 50%; display: grid; place-items: center; font-size: 14px; font-weight: 700; }
.or { background: #ee8733; margin-left: 7px; }
.rd { background: #d12a2c; margin-left: 6px; }
.jshield { margin-left: 22px; }
.juser { margin-left: 22px; }
.uname { width: 134px; margin-left: 7px; letter-spacing: -0.3px; }
.jchev { margin-left: 12px; }
.jout { margin-left: 24px; }
.lo { margin-left: 8px; letter-spacing: 0; }

.crumbs { height: 57px; background: #f5f5f8; display: flex; align-items: center; padding-left: 23px; font-size: 16.7px; letter-spacing: -0.1px; -webkit-text-stroke: 0.4px #14141f; }
.crumbs span:first-child { width: 103px; }
.crumbs span:nth-child(3) { margin-left: 17px; width: 65px; }

/* page body */
.page { flex: none; height: 743px; display: flex; padding: 33px 32px 0 19px; }
.side { width: 406px; }
.task { height: 49px; margin-bottom: 3px; border-radius: 13px; display: flex; align-items: center; gap: 13.5px; padding-left: 14.5px; letter-spacing: -0.22px; }
.task.on { background: #ecedf3; font-weight: 600; font-size: 16.8px; letter-spacing: -0.3px; }
.builds { margin: 33px 0 0 -6px; width: 412px; height: 206px; border: 2px solid #ecebf2; border-radius: 20px; padding: 0 13px; }
.bhead { height: 60px; display: flex; justify-content: space-between; align-items: center; padding: 0 48px 0 4px; font-size: 16.5px; letter-spacing: -0.2px; }
.bhead b { margin-top: -2px; }
.bhead svg { margin-top: -3px; }
.filter { height: 48px; border-radius: 12px; background: #f3f2f7; color: #6b84a6; display: flex; align-items: center; padding: 0 10px 0 15px; gap: 14px; letter-spacing: -0.2px; }
.filter i { margin-left: auto; width: 27px; height: 27px; border: 2px solid #cdd2de; border-radius: 6px; }
.day { margin: 19px 0 0 4px; font-size: 14.7px; line-height: 22px; color: #6b84a6; letter-spacing: -0.3px; }
.run { height: 40px; margin-top: 3px; display: flex; align-items: center; padding-left: 6px; font-size: 15px; color: #6b84a6; letter-spacing: 0.15px; }
.run span { padding-top: 5px; }
.run .num { margin-left: 13px; width: 29px; color: #14141f; }
.run .rc { margin-left: auto; margin-right: 13px; color: #4a6488; }

.main { flex: 1; margin-left: 33px; display: flex; flex-direction: column; }
.title { height: 46px; display: flex; align-items: center; padding-left: 2px; }
h1 { margin: 2px 0 0 22px; font-size: 28.5px; font-weight: 400; letter-spacing: -0.2px; -webkit-text-stroke: 0.7px #14141f; }
.desc { margin-left: auto; width: 191px; height: 46px; border-radius: 13px; background: #f6f6f9; display: flex; align-items: center; gap: 11px; padding-left: 19px; letter-spacing: -0.15px; white-space: nowrap; }
h2 { margin: 30px 0 0; font-size: 26.2px; line-height: 40px; font-weight: 400; letter-spacing: -0.1px; -webkit-text-stroke: 0.7px #14141f; }
ul { margin: 29px 0 0; padding-left: 49.5px; line-height: 26.25px; letter-spacing: -0.2px; }
li a { color: #2f6de0; }
.main footer { margin-top: auto; height: 60px; display: flex; justify-content: flex-end; line-height: 40px; letter-spacing: -0.35px; padding-right: 2px; }
.api { margin-right: 51px; }

/* floating build menu */
.menu { position: absolute; left: 383px; top: 624px; width: 254px; height: 241px; padding: 8px; border-radius: 18px; background: #fff; box-shadow: 0 6px 36px rgba(0,0,0,.17), 0 2px 10px rgba(0,0,0,.08); font-size: 15.3px; letter-spacing: 0.05px; }
.menu a { height: 45px; display: flex; align-items: center; gap: 13px; padding-left: 13px; border-radius: 12px; white-space: nowrap; }
.menu svg { width: 21px; }
.menu .on { background: #f1f0f6; }
.hoverurl { position: absolute; left: 0; top: 993px; width: 287px; height: 28px; background: #650c33; color: #fff; border-radius: 0 4px 0 0; font-size: 14.4px; line-height: 27px; padding-left: 5px; letter-spacing: -0.08px; z-index: 2; }

/* Windows taskbar */
.taskbar {
  height: 59px;
  margin-top: -1px;
  flex: 1;
  border-top: 1px solid #b0b5b8;
  background: linear-gradient(90deg, #efe9ea 0, #ede9e9 200px, #dce6ec 290px, #dae6e9 380px, #d9e9ed 560px, #d6e7ee 700px, #e1e8ea 900px, #dfe8ea 1080px, #e3e3e1 1180px, #e6e5e4 1350px, #f0e9ec 1560px, #f3e4e9 1920px);
  display: flex;
  color: #1b1b1b;
}
.weather { position: relative; width: 284px; padding: 4px 0 0 24px; }
.weather b { position: absolute; left: 40px; top: 7px; width: 20px; height: 20px; border-radius: 50%; background: #c42b1c; color: #fff; font-size: 13px; line-height: 20px; text-align: center; font-weight: 400; }
.apps { width: 901px; display: flex; }
.win { margin-top: 15px; }
.search { width: 274px; height: 39px; margin: 10px 0 0 17px; border-radius: 20px; background: #f4f8fa; border: 1px solid #cbd9dd; display: flex; align-items: center; gap: 12px; padding-left: 14px; font-size: 16.2px; color: #5a5a5a; letter-spacing: -0.1px; }
.pins { display: flex; margin-left: 4px; }
.pins span { width: 55px; height: 58px; display: grid; place-items: center; position: relative; }
.run1::after, .act::after { content: ""; position: absolute; bottom: 4px; left: 23px; width: 8px; height: 4px; border-radius: 2px; background: #85898b; }
.act svg { background: #eff5f6; border-radius: 6px; box-shadow: 0 0 0 1px #d9e2e5; }
.act::after { left: 17px; width: 20px; background: #5b7585; }
.tray { width: 440px; display: flex; gap: 20px; align-items: center; }
.tray svg { width: 20px; height: 20px; }
.lang { width: 36px; text-align: center; font-size: 14.6px; line-height: 20px; padding-top: 9px; letter-spacing: 0; }
.sys { width: 90px; margin-left: 19px; display: flex; gap: 10px; align-items: center; }
.clock { width: 96px; text-align: right; font-size: 14.8px; line-height: 20px; padding-top: 9px; letter-spacing: 0.05px; white-space: nowrap; }
.bell { margin: 20px 0 0 11px; }
```
